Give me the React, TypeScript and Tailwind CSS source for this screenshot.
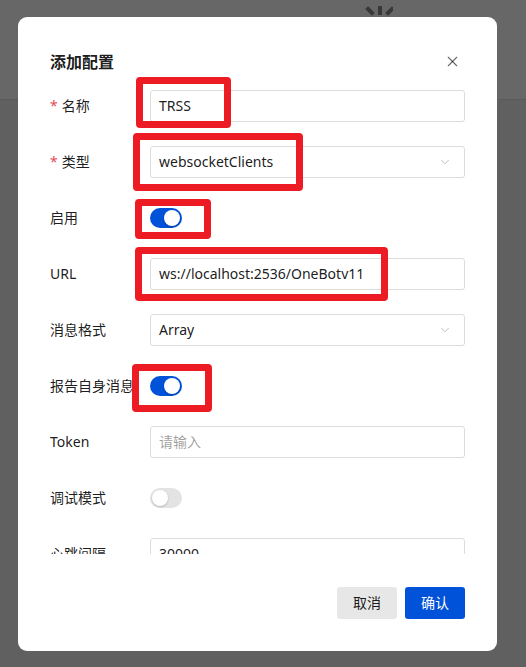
import { ChevronDown, X } from 'lucide-react';

type Row = {
  label: string;
  required?: boolean;
  kind: 'input' | 'select' | 'switch';
  value?: string;
  placeholder?: string;
  on?: boolean;
};

const rows: Row[] = [
  { label: '名称', required: true, kind: 'input', value: 'TRSS' },
  { label: '类型', required: true, kind: 'select', value: 'websocketClients' },
  { label: '启用', kind: 'switch', on: true },
  { label: 'URL', kind: 'input', value: 'ws://localhost:2536/OneBotv11' },
  { label: '消息格式', kind: 'select', value: 'Array' },
  { label: '报告自身消息', kind: 'switch', on: true },
  { label: 'Token', kind: 'input', placeholder: '请输入' },
  { label: '调试模式', kind: 'switch', on: false },
  { label: '心跳间隔', kind: 'input', value: '30000' },
];

// red annotation boxes drawn on top of the screenshot
const marks = [
  'left-[136px] top-[77px] w-[95px] h-[51px]',
  'left-[133px] top-[133px] w-[170px] h-[58px]',
  'left-[135px] top-[199px] w-[76px] h-[40px]',
  'left-[135px] top-[247px] w-[253px] h-[54px]',
  'left-[132px] top-[364px] w-[80px] h-[48px]',
];

function Switch({ on }: { on?: boolean }) {
  return (
    <div
      className={`w-8 h-5 rounded-full flex items-center px-[2px] ${
        on ? 'bg-[#0052d9] justify-end' : 'bg-[#e3e3e3] justify-start'
      }`}
    >
      <div className="w-4 h-4 rounded-full bg-white shadow-[0_1px_2px_rgba(0,0,0,0.2)]" />
    </div>
  );
}

function Field({ row }: { row: Row }) {
  if (row.kind === 'switch') return <Switch on={row.on} />;
  return (
    <div className="flex-1 h-8 flex items-center justify-between border border-[#dcdcdc] rounded-[3px] pl-2 pr-3 bg-white">
      {row.value ? (
        <span className="text-[rgba(0,0,0,0.9)]">{row.value}</span>
      ) : (
        <span className="text-[rgba(0,0,0,0.4)]">{row.placeholder}</span>
      )}
      {row.kind === 'select' && (
        <ChevronDown size={14} strokeWidth={1.4} className="text-[#b0b0b0]" />
      )}
    </div>
  );
}

export default function App() {
  return (
    <div className="relative w-[526px] h-[667px] overflow-hidden bg-[#606060] text-sm font-['Noto_Sans','Noto_Sans_CJK_SC',sans-serif]">
      {/* page behind the mask */}
      <div className="h-[100px] bg-[#676767] border-b border-[#5a5a5a] flex justify-center">
        <svg width="40" height="30" viewBox="0 0 40 30" className="ml-[220px] mt-[1px]">
          <g stroke="#383838" strokeWidth="4" strokeLinecap="square">
            <line x1="15" y1="8" x2="19" y2="12" />
            <line x1="27" y1="7" x2="27" y2="12" />
            <line x1="39" y1="8" x2="35" y2="12" />
          </g>
        </svg>
      </div>

      {/* dialog */}
      <div className="absolute left-[18px] top-[17px] w-[479px] bg-white rounded-[9px] px-8">
        <div className="pt-8 flex items-center justify-between">
          <h2 className="h-6 mt-[1px] text-base leading-6 font-semibold text-[rgba(0,0,0,0.9)]">
            添加配置
          </h2>
          <X size={17} strokeWidth={1.6} className="mr-[4px] text-[rgba(0,0,0,0.6)]" />
        </div>

        <div className="mt-4 h-[464px] overflow-hidden">
          {rows.map((row) => (
            <div key={row.label} className="h-8 mb-6 flex items-center">
              <div className="w-[100px] shrink-0 whitespace-nowrap text-[rgba(0,0,0,0.9)]">
                {row.required && <span className="text-[#e34d59] mr-1">*</span>}
                {row.label}
              </div>
              <Field row={row} />
            </div>
          ))}
        </div>

        <div className="pt-[33px] pb-8 flex justify-end gap-2">
          <button className="w-[60px] h-8 rounded-[3px] bg-[#e7e7e7] text-[rgba(0,0,0,0.9)]">
            取消
          </button>
          <button className="w-[60px] h-8 rounded-[3px] bg-[#0052d9] text-white">
            确认
          </button>
        </div>
      </div>

      {marks.map((m) => (
        <div key={m} className={`absolute ${m} border-[7px] border-[#ed1c24] rounded-[4px]`} />
      ))}
    </div>
  );
}
